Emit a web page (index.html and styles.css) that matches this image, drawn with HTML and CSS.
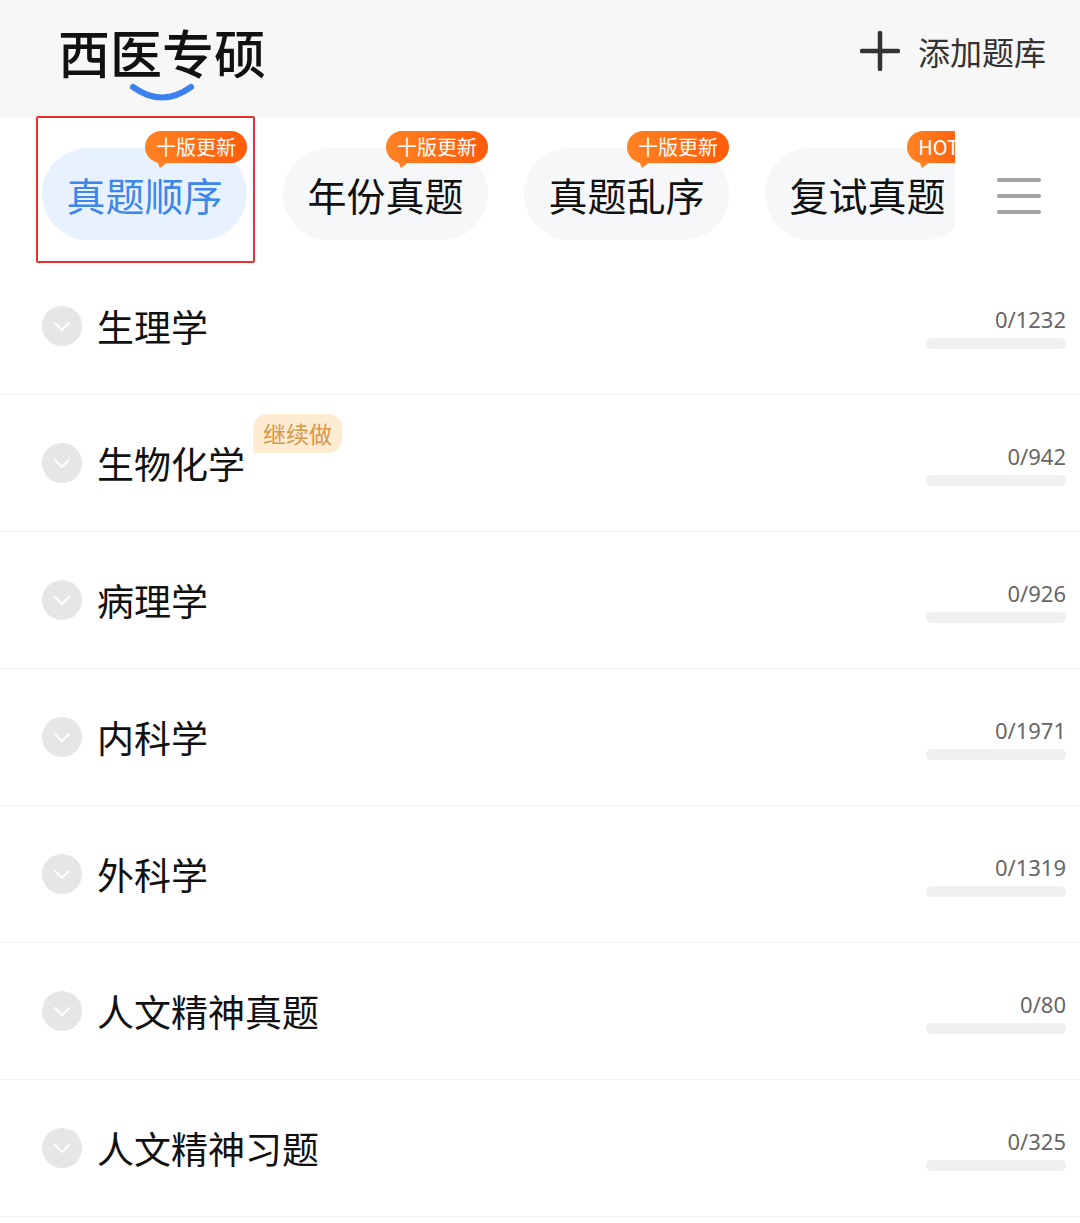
FILE: index.html
```html
<!DOCTYPE html>
<html lang="zh-CN">
<head>
    <meta charset="UTF-8">
    <meta name="viewport" content="width=device-width, initial-scale=1.0">
    <title>西医专硕</title>
    <link rel="stylesheet" href="styles.css">
</head>
<body>

    <!-- 顶部栏 -->
    <div class="topbar">
        <div class="brand">
            <h1 class="brand-title">西医专硕</h1>
            <svg class="brand-smile" width="66" height="20" viewBox="0 0 66 20">
                <path d="M4 5 Q33 26 62 5" fill="none" stroke="#3b82f0" stroke-width="6" stroke-linecap="round"/>
            </svg>
        </div>
        <div class="add-bank">
            <svg width="40" height="40" viewBox="0 0 40 40">
                <path d="M20 2 V38 M2 20 H38" stroke="#333" stroke-width="4.5" stroke-linecap="round"/>
            </svg>
            <span>添加题库</span>
        </div>
    </div>

    <!-- 分类标签 -->
    <div class="tabbar">
        <div class="tabs">
            <div class="tab active">真题顺序<span class="tip">十版更新</span></div>
            <div class="tab">年份真题<span class="tip">十版更新</span></div>
            <div class="tab">真题乱序<span class="tip">十版更新</span></div>
            <div class="tab">复试真题<span class="tip">HOT</span></div>
        </div>
        <svg class="menu-icon" width="44" height="40" viewBox="0 0 44 40">
            <path d="M2 4 H42 M2 20 H42 M2 36 H42" stroke="#a3a3a3" stroke-width="4" stroke-linecap="round"/>
        </svg>
        <div class="mark-box"></div>
    </div>

    <!-- 科目列表 -->
    <div class="subject-list" id="subjectList"></div>

    <script>
        const subjects = [
            { name: '生理学', done: 0, total: 1232 },
            { name: '生物化学', done: 0, total: 942, resume: true },
            { name: '病理学', done: 0, total: 926 },
            { name: '内科学', done: 0, total: 1971 },
            { name: '外科学', done: 0, total: 1319 },
            { name: '人文精神真题', done: 0, total: 80 },
            { name: '人文精神习题', done: 0, total: 325 }
        ];

        const list = document.getElementById('subjectList');

        subjects.forEach(s => {
            const row = document.createElement('div');
            row.className = 'subject';
            row.innerHTML = `
                <span class="fold">
                    <svg width="18" height="11" viewBox="0 0 18 11"><path d="M2 2 L9 9 L16 2" fill="none" stroke="#fff" stroke-width="2" stroke-linecap="round" stroke-linejoin="round"/></svg>
                </span>
                <span class="subject-name">${s.name}${s.resume ? '<span class="resume">继续做</span>' : ''}</span>
                <div class="stat">
                    <span class="count">${s.done}/${s.total}</span>
                    <div class="bar"><div class="bar-fill" style="width:${s.done / s.total * 100}%"></div></div>
                </div>`;
            list.appendChild(row);
        });
    </script>

</body>
</html>
```

FILE: styles.css
```css
body {
    margin: 0;
    width: 1080px;
    font-family: "Noto Sans", "Noto Sans CJK SC", sans-serif;
    background: #fff;
    color: #111;
}

/* 顶部栏 */
.topbar {
    display: flex;
    justify-content: space-between;
    align-items: flex-start;
    height: 117px;
    background: #f7f7f7;
    padding: 0 34px 0 58px;
    box-sizing: border-box;
}

.brand {
    display: flex;
    flex-direction: column;
    align-items: center;
    padding-top: 22px;
}

.brand-title {
    margin: 0;
    font-family: "Noto Sans CJK SC", sans-serif;
    font-size: 52px;
    line-height: 60px;
    font-weight: 500;
    color: #111;
}

.add-bank {
    display: flex;
    align-items: center;
    gap: 18px;
    padding-top: 28px;
    font-family: "Noto Sans CJK SC", sans-serif;
    font-size: 32px;
    color: #333;
}

/* 分类标签 */
.tabbar {
    position: relative;
    display: flex;
    align-items: flex-start;
    height: 141px;
    padding: 14px 0 0 42px;
    box-sizing: border-box;
}

.tabs {
    display: flex;
    gap: 36px;
    width: 913px;
    padding-top: 17px;
    overflow: hidden;
    flex-shrink: 0;
}

.tab {
    position: relative;
    flex-shrink: 0;
    width: 205px;
    height: 92px;
    border-radius: 46px;
    background: #f6f7f9;
    font-family: "Noto Sans CJK SC", sans-serif;
    font-size: 39px;
    line-height: 92px;
    text-align: center;
    color: #111;
}

.tab.active {
    background: #e8f2ff;
    color: #3d86ea;
}

.tip {
    position: absolute;
    top: -17px;
    right: 0;
    height: 32px;
    padding: 0 11px;
    border-radius: 16px;
    background: linear-gradient(90deg, #ff8222, #ff5c0b);
    color: #fff;
    font-size: 20px;
    line-height: 32px;
}

.tip::after {
    content: "";
    position: absolute;
    left: 12px;
    bottom: -5px;
    border-left: 3px solid transparent;
    border-right: 9px solid transparent;
    border-top: 7px solid #ff8020;
}

.menu-icon {
    margin: 45px 0 0 42px;
}

.mark-box {
    position: absolute;
    top: -1px;
    left: 36px;
    width: 219px;
    height: 147px;
    border: 2px solid #e8312f;
    box-sizing: border-box;
    border-radius: 2px;
}

/* 科目列表 */
.subject {
    display: flex;
    align-items: center;
    height: 137px;
    padding: 0 14px 0 42px;
    border-bottom: 1px solid #f2f2f2;
    box-sizing: border-box;
}

.fold {
    display: flex;
    align-items: center;
    justify-content: center;
    width: 40px;
    height: 40px;
    border-radius: 50%;
    background: #e6e6e6;
    margin-right: 15px;
}

.subject-name {
    position: relative;
    font-family: "Noto Sans CJK SC", sans-serif;
    font-size: 37px;
    line-height: 44px;
    color: #111;
}

.resume {
    position: absolute;
    left: calc(100% + 8px);
    top: -27px;
    height: 39px;
    padding: 0 10px;
    border-radius: 14px 14px 14px 0;
    background: #fdebd2;
    color: #d69849;
    font-size: 23px;
    line-height: 39px;
    white-space: nowrap;
}

.stat {
    margin-left: auto;
    display: flex;
    flex-direction: column;
    align-items: flex-end;
    width: 140px;
    padding-top: 2px;
}

.count {
    font-size: 22px;
    line-height: 26px;
    color: #666;
}

.bar {
    width: 140px;
    height: 11px;
    margin-top: 6px;
    border-radius: 6px;
    background: #f0f0f0;
    overflow: hidden;
}

.bar-fill {
    height: 100%;
    background: #3d86ea;
}
```
